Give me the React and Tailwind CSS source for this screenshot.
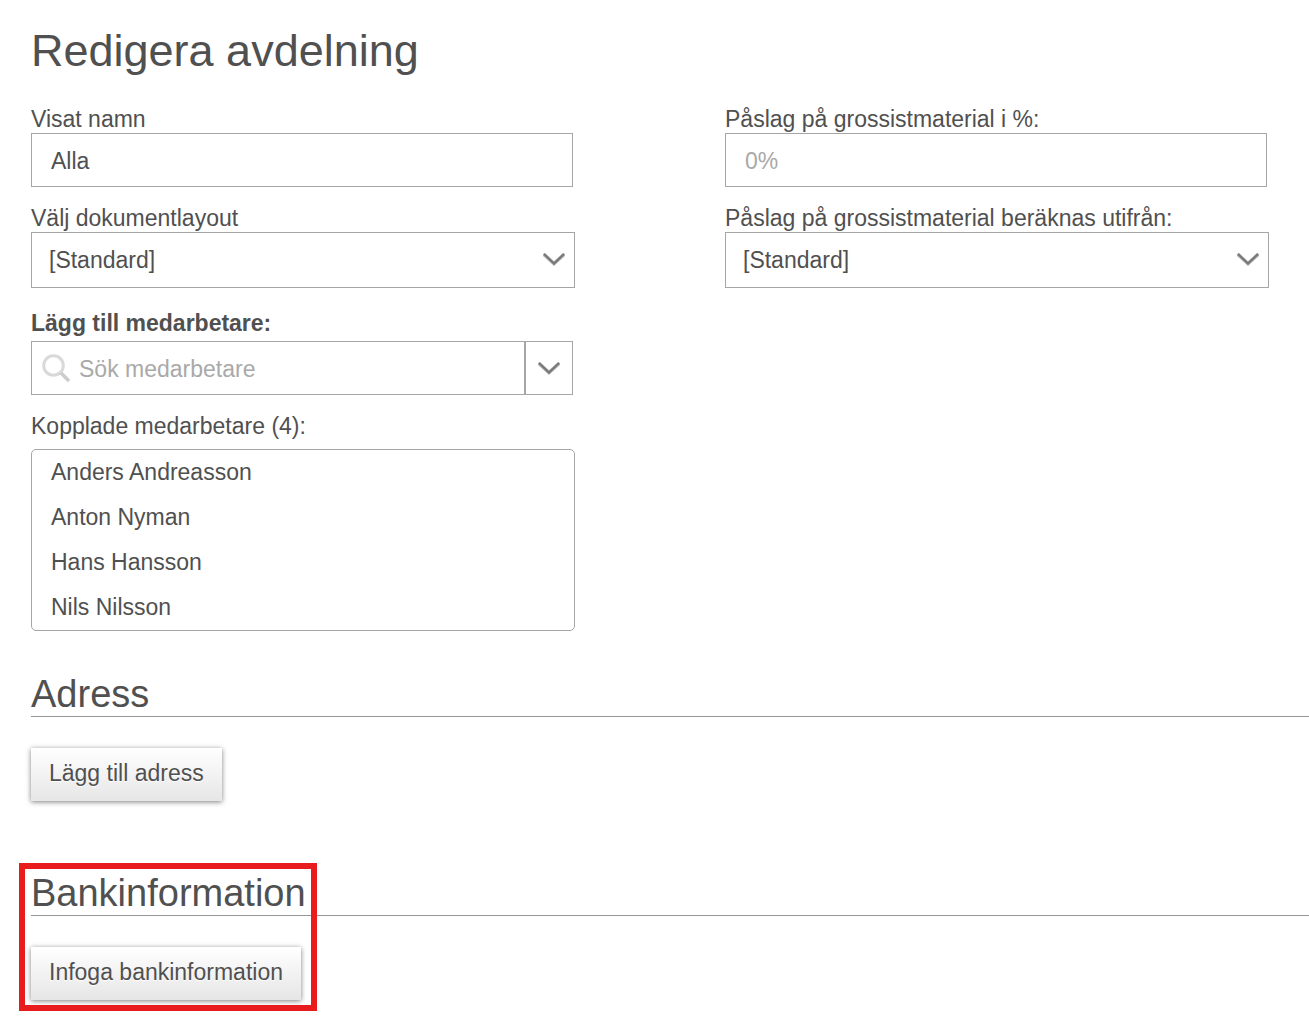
const label = "block text-[23px] leading-[28px]";
const box = "w-full border border-[#a6a6a6] bg-white text-[23px] text-[#505050] outline-none placeholder:text-[#a9a9a9] placeholder:opacity-100";

function Chevron({ className }) {
  return (
    <svg className={className} width="22" height="13" viewBox="0 0 22 13" fill="none" aria-hidden="true">
      <path d="M0.5 1 L11 10.5 L21.5 1" stroke="#b5b5b5" strokeWidth="3.6" />
      <path d="M1 1 L11 10.5 L21 1" stroke="#777" strokeWidth="2" />
    </svg>
  );
}

function TextField({ id, text, ...rest }) {
  return (
    <div className="mr-0.5">
      <label htmlFor={id} className={label}>{text}</label>
      <input id={id} className={`${box} block h-[54px] px-[19px] pt-0.5`} {...rest} />
    </div>
  );
}

function SelectField({ id, text }) {
  return (
    <div className="mt-[17px]">
      <label htmlFor={id} className={label}>{text}</label>
      <div className="relative">
        <select id={id} className={`${box} block h-14 appearance-none px-[17px]`}>
          <option>[Standard]</option>
        </select>
        <Chevron className="pointer-events-none absolute top-[21px] right-2.5" />
      </div>
    </div>
  );
}

function Section({ title, action }) {
  return (
    <section>
      <h2 className="border-b border-[#999] text-[38px] leading-[44px]">{title}</h2>
      <button className="mt-[31px] h-[53px] bg-linear-to-b from-white to-[#e6e6e6] px-[18px] pb-0.5 text-[23px] shadow-[0_1px_5px_rgba(0,0,0,0.5)] text-shadow-[0_1px_1px_#fff]">{action}</button>
    </section>
  );
}

const people = ["Anders Andreasson", "Anton Nyman", "Hans Hansson", "Nils Nilsson"];

export default function App() {
  return (
    <main className="min-h-screen bg-white pt-6 pl-[31px] font-['Liberation_Sans',Arial,sans-serif] text-[#505050]">
      <h1 className="text-[45px] leading-[54px]">Redigera avdelning</h1>
      <div className="mt-[27px] mr-10 grid grid-cols-2 gap-[150px]">
        <div>
          <TextField id="name" text="Visat namn" defaultValue="Alla" />
          <SelectField id="layout" text="Välj dokumentlayout" />
          <label htmlFor="search" className="mt-[22px] block text-[23px] leading-[26px] font-bold">Lägg till medarbetare:</label>
          <div className="mt-[5px] mr-0.5 flex h-[54px] border border-[#a6a6a6]">
            <svg className="mt-3 ml-2.5 shrink-0" width="29" height="29" viewBox="0 0 29 29" fill="none" aria-hidden="true">
              <circle cx="11.5" cy="11.5" r="9.8" stroke="#d9d9d9" strokeWidth="3" />
              <path d="M19 19 L27 27" stroke="#ccc" strokeWidth="3.6" />
            </svg>
            <input id="search" placeholder="Sök medarbetare" className="min-w-0 flex-1 px-2 pt-0.5 text-[23px] outline-none placeholder:text-[#a9a9a9] placeholder:opacity-100" />
            <button aria-label="Visa medarbetare" className="flex w-12 items-center justify-center border-l-2 border-[#a6a6a6]">
              <Chevron />
            </button>
          </div>
          <h3 className="mt-[18px] text-[23px] leading-[26px]">Kopplade medarbetare (4):</h3>
          <ul className="mt-2.5 rounded-[5px] border border-[#a6a6a6] px-[19px] text-[23px] leading-[45px]">
            {people.map((p) => <li key={p}>{p}</li>)}
          </ul>
        </div>
        <div>
          <TextField id="markup" text="Påslag på grossistmaterial i %:" placeholder="0%" />
          <SelectField id="basis" text="Påslag på grossistmaterial beräknas utifrån:" />
        </div>
      </div>
      <div className="mt-[41px]">
        <Section title="Adress" action="Lägg till adress" />
      </div>
      <div className="relative mt-[70px]">
        <Section title="Bankinformation" action="Infoga bankinformation" />
        <div className="pointer-events-none absolute -top-2 -left-3 h-[148px] w-[298px] border-[6px] border-[#e81c1c]" />
      </div>
    </main>
  );
}
